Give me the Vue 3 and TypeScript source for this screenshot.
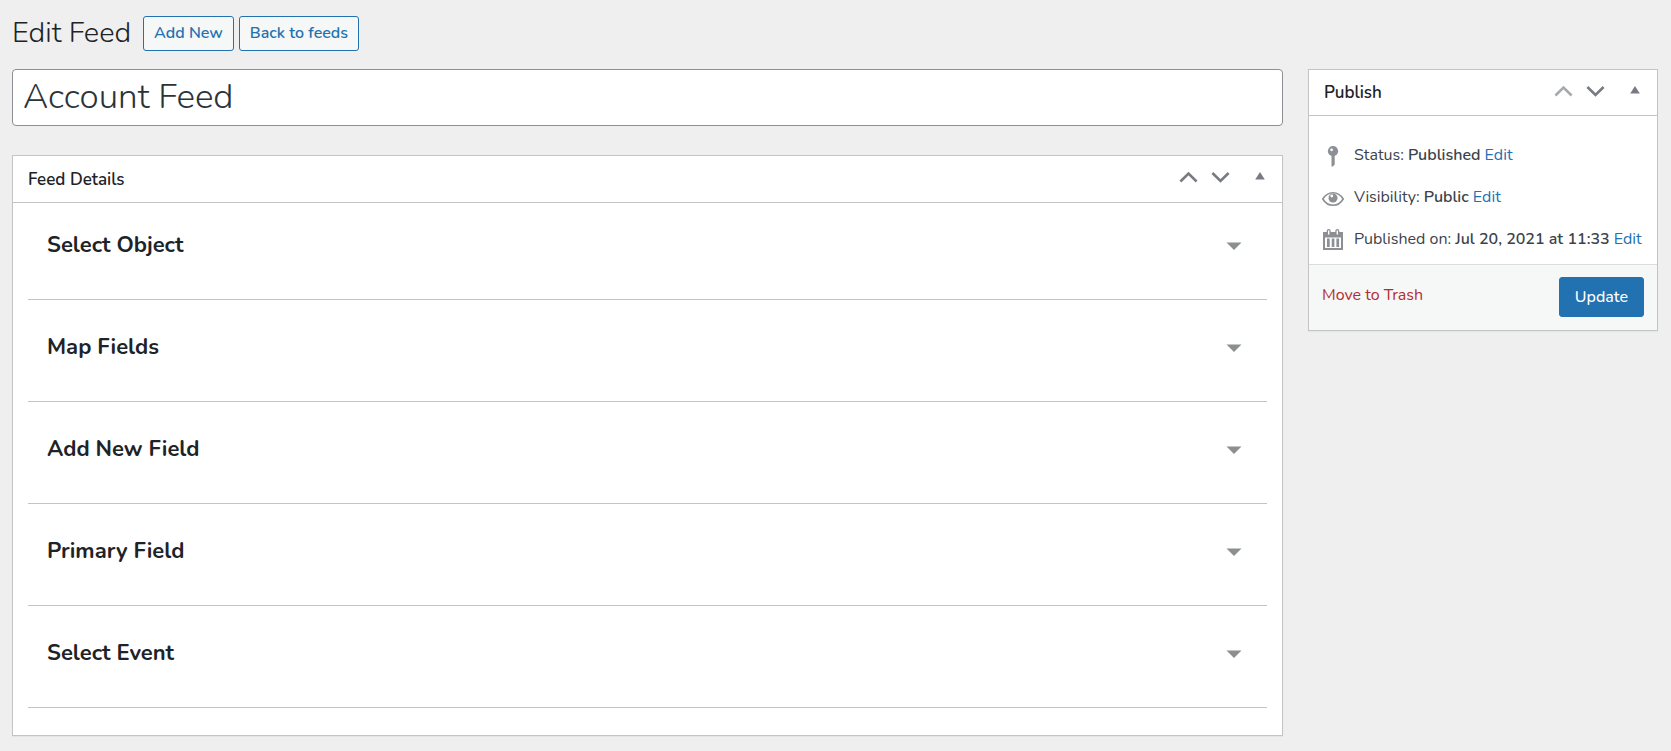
<script setup lang="ts">
import { ref } from 'vue'

interface PublishRow {
  icon: 'status' | 'visibility' | 'date'
  label: string
  value: string
}

const title = ref('Account Feed')

const sections: string[] = [
  'Select Object',
  'Map Fields',
  'Add New Field',
  'Primary Field',
  'Select Event',
]

const rows: PublishRow[] = [
  { icon: 'status', label: 'Status:', value: 'Published' },
  { icon: 'visibility', label: 'Visibility:', value: 'Public' },
  { icon: 'date', label: 'Published on:', value: 'Jul 20, 2021 at 11:33' },
]
</script>

<template>
  <div class="page">
    <header class="page-head">
      <h1>Edit Feed</h1>
      <a class="action" href="#">Add New</a>
      <a class="action" href="#">Back to feeds</a>
    </header>

    <div class="columns">
      <main class="main">
        <input v-model="title" class="title-input" type="text" aria-label="Feed title" />

        <section class="box">
          <div class="box-head">
            <h2>Feed Details</h2>
            <div class="box-tools">
              <button type="button" aria-label="Move up">
                <svg viewBox="0 0 20 20"><path d="M2.4 14.5 10.5 6.6 18.6 14.5" class="stroke" /></svg>
              </button>
              <button type="button" aria-label="Move down">
                <svg viewBox="0 0 20 20"><path d="M2.4 6 10.5 13.9 18.6 6" class="stroke" /></svg>
              </button>
              <button type="button" class="toggle" aria-label="Toggle panel">
                <svg viewBox="0 0 20 20"><path d="M10 5 14.8 12.5H5.2z" /></svg>
              </button>
            </div>
          </div>
          <div class="sections">
            <button v-for="name in sections" :key="name" type="button" class="section">
              <span>{{ name }}</span>
              <svg class="caret" viewBox="0 0 16 8"><path d="M.5 .5h15L8 8z" /></svg>
            </button>
          </div>
        </section>
      </main>

      <aside class="box side">
        <div class="box-head">
          <h2>Publish</h2>
          <div class="box-tools">
            <button type="button" disabled aria-label="Move up">
              <svg viewBox="0 0 20 20"><path d="M2.4 14.5 10.5 6.6 18.6 14.5" class="stroke" /></svg>
            </button>
            <button type="button" aria-label="Move down">
              <svg viewBox="0 0 20 20"><path d="M2.4 6 10.5 13.9 18.6 6" class="stroke" /></svg>
            </button>
            <button type="button" class="toggle" aria-label="Toggle panel">
              <svg viewBox="0 0 20 20"><path d="M10 5 14.8 12.5H5.2z" /></svg>
            </button>
          </div>
        </div>
        <ul class="info">
          <li v-for="row in rows" :key="row.icon">
            <svg v-if="row.icon === 'status'" class="icon" viewBox="0 0 24 24">
              <circle cx="12" cy="7.2" r="5.1" />
              <path d="M10.5 11h3.2v9.2l-1.8 2.2h-1.4z" />
              <circle class="paper" cx="10.6" cy="5.8" r="1.4" />
            </svg>
            <svg v-else-if="row.icon === 'visibility'" class="icon" viewBox="0 0 24 24">
              <path class="lid" d="M1.8 13C4.2 9 7.800 6.700 12 6.700S19.800 9 22.200 13C19.800 17 16.200 19.300 12 19.300S4.200 17 1.800 13z" />
              <circle cx="12" cy="12" r="4.500" />
              <circle class="paper" cx="10.800" cy="10" r="1.400" />
            </svg>
            <svg v-else class="icon" viewBox="0 0 24 24">
              <path d="M2 4h20v18H2z" />
              <path class="paper" d="M4 9.5h16v10.5H4z" />
              <path d="M6 10.500h2.700v8.500H6zM10.700 10.500h2.700v8.500h-2.700zM15.400 10.500h2.700v8.500h-2.700z" />
              <path class="ring" d="M7.700 3v3M16.300 3v3" />
              <path class="slot" d="M7.700 3v3M16.300 3v3" />
            </svg>
            <p>{{ row.label }} <b>{{ row.value }}</b> <a href="#">Edit</a></p>
          </li>
        </ul>
        <div class="box-foot">
          <a class="trash" href="#">Move to Trash</a>
          <button type="button" class="update">Update</button>
        </div>
      </aside>
    </div>
  </div>
</template>

<style>
body {
  margin: 0;
  background: #efefef;
}
</style>

<style scoped>
.page {
  padding: 15px 13px 15px 12px;
  font-family: Nunito, Lato, "Open Sans", sans-serif;
  font-size: 16px;
  line-height: 24px;
  font-weight: 400;
  color: #3c434a;
}
.page *,
.page {
  box-sizing: border-box;
}
a {
  color: #2271b1;
  text-decoration: none;
}
button {
  font: inherit;
  cursor: pointer;
}
.page-head {
  display: flex;
  align-items: center;
  gap: 5px;
  height: 36px;
}
h1 {
  margin: 0 7px 0 0;
  font-size: 29px;
  line-height: 36px;
  font-weight: 300;
  color: #1d2327;
}
.action {
  padding: 4px 10px 5px;
  border: 1px solid #2271b1;
  border-radius: 3px;
  background: #f6f7f7;
  font-weight: 600;
}
.columns {
  display: flex;
  align-items: flex-start;
  gap: 25px;
  margin-top: 18px;
}
.main {
  flex: 1;
  min-width: 0;
}
.title-input {
  display: block;
  width: 100%;
  height: 57px;
  margin: 0 0 29px;
  padding: 0 10px 2px;
  border: 1px solid #8c8f94;
  border-radius: 4px;
  background: #fff;
  font-family: inherit;
  font-size: 35px;
  font-weight: 300;
  color: #2c3338;
}
.box {
  border: 1px solid #c3c4c7;
  background: #fff;
  box-shadow: 0 1px 1px rgba(0, 0, 0, 0.04);
}
.side {
  flex: 0 0 350px;
}
.box-head {
  display: flex;
  align-items: flex-start;
  justify-content: space-between;
  height: 46px;
  padding: 5px 6px 0 15px;
  border-bottom: 1px solid #c3c4c7;
}
.main .box-head {
  height: 47px;
}
.main h2 {
  padding-top: 7px;
}
h2 {
  margin: 0;
  padding-top: 6px;
  font-size: 17px;
  line-height: 24px;
  font-weight: 600;
  color: #1d2327;
}
.box-tools {
  display: flex;
}
.box-tools button {
  display: flex;
  align-items: center;
  justify-content: center;
  width: 32px;
  height: 32px;
  padding: 0;
  border: 0;
  background: none;
  color: #787c82;
}
.box-tools button:disabled {
  color: #a7aaad;
}
.box-tools .toggle {
  margin-left: 8px;
}
.box-tools svg {
  width: 20px;
  height: 20px;
  fill: currentColor;
}
.box-tools .stroke {
  fill: none;
  stroke: currentColor;
  stroke-width: 2.6;
}
.sections {
  padding: 0 15px 27px;
}
.section {
  display: flex;
  align-items: flex-start;
  justify-content: space-between;
  width: 100%;
  height: 102px;
  padding: 33px 25px 0 19px;
  border: 0;
  border-bottom: 1px solid #c3c4c7;
  background: none;
  font-size: 22px;
  line-height: 28px;
  font-weight: 700;
  color: #1d2327;
  text-align: left;
}
.section:first-child {
  height: 97px;
  padding-top: 28px;
}
.caret {
  width: 16px;
  height: 8px;
  margin-top: 11px;
  fill: #8c8f8f;
}
.info {
  display: flex;
  flex-direction: column;
  gap: 18px;
  margin: 0;
  padding: 27px 12px 13px;
  list-style: none;
}
.info li {
  display: flex;
  gap: 9px;
  height: 24px;
}
.info p {
  margin: 0;
  white-space: nowrap;
}
.info b {
  font-weight: 600;
}
.icon {
  flex: none;
  width: 24px;
  height: 24px;
  margin-top: 1px;
  fill: #8c8f94;
}
.icon .paper {
  fill: #fff;
}
.icon .lid {
  fill: none;
  stroke: #8c8f94;
  stroke-width: 1.6;
}
.ring,
.slot {
  stroke: #fff;
  stroke-width: 4;
  stroke-linecap: round;
}
.ring {
  stroke: #8c8f94;
}
.slot {
  stroke-width: 1.4;
}
.box-foot {
  display: flex;
  align-items: flex-start;
  justify-content: space-between;
  padding: 12px 13px 13px;
  border-top: 1px solid #dcdcde;
  background: #f6f7f7;
}
.trash {
  margin-top: 6px;
  color: #b32d2e;
}
.update {
  height: 40px;
  padding: 0 15px;
  border: 1px solid #2271b1;
  border-radius: 3px;
  background: #2271b1;
  font-weight: 500;
  color: #fff;
}
</style>
